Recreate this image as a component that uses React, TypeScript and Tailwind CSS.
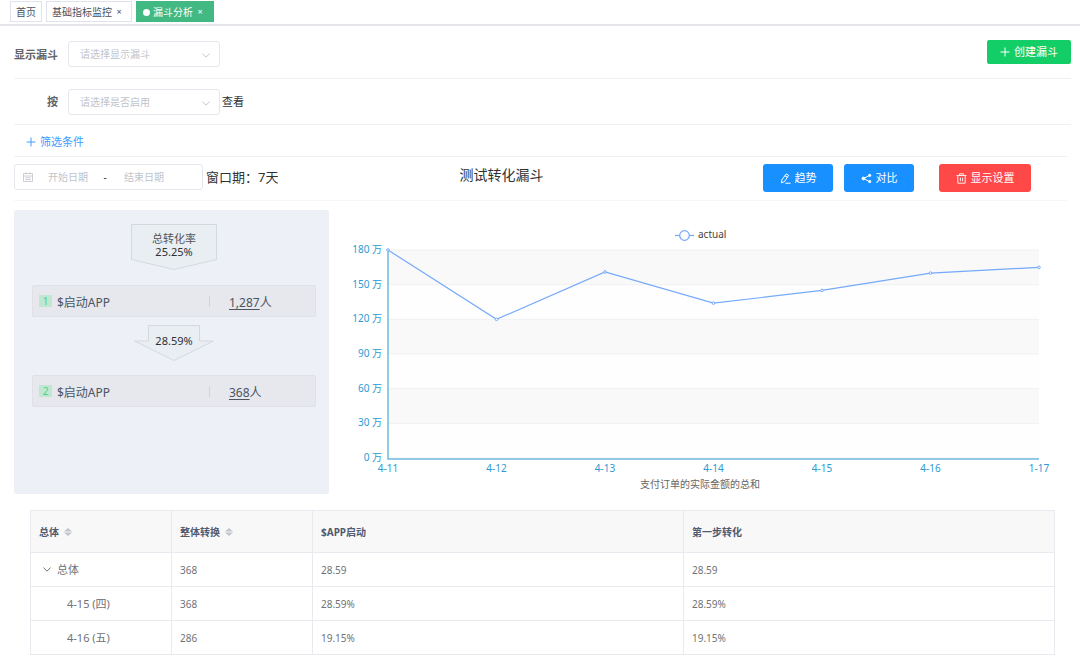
import React from "react";

type IconProps = { className?: string };

const PlusIcon = ({ className = "" }: IconProps) => (
  <svg viewBox="0 0 10 10" className={`h-[10px] w-[10px] shrink-0 ${className}`} fill="none" stroke="currentColor" aria-hidden="true">
    <path d="M5 .5v9M.5 5h9" />
  </svg>
);

const EditIcon = () => (
  <svg viewBox="0 0 11 11" className="h-[11px] w-[11px] shrink-0" fill="none" stroke="currentColor" aria-hidden="true">
    <path d="M6.200 .9 8.600 2.300 4.500 8.600 1.400 9.900 1.900 6.900ZM5 2.800 7.400 4.200M5.200 10.200H10.600" strokeLinejoin="round" />
  </svg>
);

const ShareIcon = () => (
  <svg viewBox="0 0 11 11" className="h-[11px] w-[11px] shrink-0" fill="currentColor" stroke="currentColor" aria-hidden="true">
    <path d="M2.4 5.5 8.6 2.4M2.4 5.5 8.6 8.6" fill="none" />
    <circle cx="2.4" cy="5.5" r="1.4" />
    <circle cx="8.7" cy="2.4" r="1.1" />
    <circle cx="8.7" cy="8.6" r="1.1" />
  </svg>
);

const TrashIcon = () => (
  <svg viewBox="0 0 11 11" className="h-[11px] w-[11px] shrink-0" fill="none" stroke="currentColor" strokeWidth=".9" aria-hidden="true">
    <path d="M.6 2.5h9.8M3.6 2.5V.8h3.8v1.7M1.8 2.5v7.7h7.4V2.5M4.4 4.6v3.6M6.6 4.6v3.6" />
  </svg>
);

const CalendarIcon = () => (
  <svg viewBox="0 0 10 10" className="h-[10px] w-[10px] shrink-0" fill="none" stroke="#c0c4cc" strokeWidth=".8" aria-hidden="true">
    <path d="M.5 1.5h9v8h-9zM.5 4h9M3 .3v2M7 .3v2M2.3 5.8h5.4M2.3 7.6h5.4" />
  </svg>
);

const ChevronIcon = ({ className = "" }: IconProps) => (
  <svg viewBox="0 0 8 5" className={`h-[5px] w-[8px] ${className}`} fill="none" stroke="currentColor" aria-hidden="true">
    <path d="M.4 .5 4 4.2 7.6 .5" />
  </svg>
);

const SortIcon = () => (
  <svg viewBox="0 0 8 8" className="h-2 w-2" fill="#c0c4cc" aria-hidden="true">
    <path d="M4 0 8 3.600H0ZM4 8 0 4.400H8Z" />
  </svg>
);

function Picker({ id, placeholder }: { id: string; placeholder: string }) {
  return (
    <div className="relative w-[152px]">
      <select
        id={id}
        defaultValue=""
        className="h-[26px] w-full appearance-none rounded-[3px] border border-[#e4e7ed] bg-white pl-[11px] pr-6 text-[10px] text-[#c0c4cc] outline-none"
      >
        <option value="">{placeholder}</option>
      </select>
      <ChevronIcon className="pointer-events-none absolute right-[10px] top-3 text-[#c0c4cc]" />
    </div>
  );
}

function Step({ index, count }: { index: number; count: string }) {
  return (
    <div className="flex h-8 w-full items-center rounded-[2px] border border-[#dfe1e6] bg-[#e6e8ed] pl-[6px] text-[12px] text-[#4b5563]">
      <span className="flex h-3 w-[13px] items-center justify-center bg-[#c0e8d0] text-[10px] leading-3 text-[#4fce8e]">{index}</span>
      <span className="ml-[5px] flex-1 pt-[3px]">$启动APP</span>
      <span className="h-[11px] w-px bg-[#d0d4da]" />
      <span className="w-[105px] pl-[19px] pt-[3px]">
        <a href="#users" className="underline underline-offset-2">{count}</a>人
      </span>
    </div>
  );
}

const points = [
  { label: "4-11", value: 180 },
  { label: "4-12", value: 120 },
  { label: "4-13", value: 161 },
  { label: "4-14", value: 134 },
  { label: "4-15", value: 145 },
  { label: "4-16", value: 160 },
  { label: "1-17", value: 165 },
];
const ticks = [0, 30, 60, 90, 120, 150, 180];
const left = 59;
const right = 710;
const bottom = 248;
const top = 40;
const xOf = (i: number) => left + (i * (right - left)) / (points.length - 1);
const yOf = (v: number) => bottom - (v * (bottom - top)) / 180;

function TrendChart() {
  return (
    <svg viewBox="0 0 751 284" className="min-w-0 flex-1 self-start text-[10px]" role="img" aria-label="actual">
      {ticks.slice(1).map((t) => (
        <rect key={t} x={left} y={yOf(t)} width={right - left} height={(bottom - top) / 6} fill={t % 60 === 0 ? "#f9f9f9" : "#fefefe"} />
      ))}
      {ticks.map((t) => (
        <g key={t}>
          <line x1={left} x2={right} y1={yOf(t)} y2={yOf(t)} stroke="#f0f0f0" />
          <text x={left - 6} y={yOf(t) + 3} textAnchor="end" fill="#2b9bd4">{t} 万</text>
        </g>
      ))}
      <path d={`M${left} ${top}V${bottom + 1}H${right}`} fill="none" stroke="#6dbbe0" strokeWidth="1.5" />
      <polyline points={points.map((p, i) => `${xOf(i)},${yOf(p.value)}`).join(" ")} fill="none" stroke="#75a9fb" strokeWidth="1.2" />
      {points.map((p, i) => (
        <g key={p.label}>
          <circle cx={xOf(i)} cy={yOf(p.value)} r="1.3" fill="#fff" stroke="#75a9fb" />
          <text x={xOf(i)} y="262" textAnchor="middle" fill="#2b9bd4">{p.label}</text>
        </g>
      ))}
      <path d="M346 25.500h19" stroke="#75a9fb" strokeWidth="1.2" />
      <circle cx="355.500" cy="25.500" r="4.800" fill="#fff" stroke="#75a9fb" strokeWidth="1.2" />
      <text x="369" y="28" fill="#444">actual</text>
      <text x="371" y="278" textAnchor="middle" fill="#666">支付订单的实际金额的总和</text>
    </svg>
  );
}

const rows = [
  ["总体", "368", "28.59", "28.59"],
  ["4-15 (四)", "368", "28.59%", "28.59%"],
  ["4-16 (五)", "286", "19.15%", "19.15%"],
];

export default function App() {
  return (
    <div className="min-h-screen bg-white font-['Noto_Sans','Noto_Sans_CJK_SC',sans-serif] text-[11px] leading-4 text-[#303133]">
      <nav className="flex h-[26px] items-start gap-1 border-b-2 border-[#e4e5e8] pl-[10px] pt-px text-[10px] text-[#495060]">
        <a href="#home" className="flex h-[21px] items-center border border-[#dfe3ec] px-[5px] pt-px">首页</a>
        <div className="flex h-[21px] items-center gap-[3px] border border-[#dfe3ec] pl-[5px] pr-2 pt-px">
          <a href="#metrics">基础指标监控</a>
          <button type="button" aria-label="关闭基础指标监控" className="w-2 text-center text-[9px]">×</button>
        </div>
        <div className="flex h-[21px] items-center gap-[3px] bg-[#42b983] pl-[7px] pr-[10px] pt-px text-white">
          <span className="h-[7px] w-[7px] rounded-full bg-white" />
          <a href="#funnel" aria-current="page">漏斗分析</a>
          <button type="button" aria-label="关闭漏斗分析" className="w-2 text-center text-[9px]">×</button>
        </div>
      </nav>

      <main className="pl-[14px] pr-[9px]">
        <div className="flex h-[53px] items-start border-b border-[#eef1f6] pt-[15px]">
          <label htmlFor="funnel" className="w-[54px] pt-[6px] font-bold text-[#606266]">显示漏斗</label>
          <Picker id="funnel" placeholder="请选择显示漏斗" />
          <button type="button" className="-mt-px ml-auto flex h-6 w-[84px] items-center justify-center gap-1 rounded-[2px] bg-[#13ce66] text-white">
            <PlusIcon />
            创建漏斗
          </button>
        </div>

        <div className="flex h-[46px] items-center border-b border-[#eef1f6]">
          <label htmlFor="enabled" className="w-[54px] pr-[10px] text-right font-bold text-[#606266]">按</label>
          <Picker id="enabled" placeholder="请选择是否启用" />
          <span className="ml-[2px]">查看</span>
        </div>

        <div className="mr-1 flex h-8 items-center border-b border-[#eef1f6] pl-3 pt-[3px]">
          <button type="button" className="flex items-center gap-1 text-[#409eff]">
            <PlusIcon />
            筛选条件
          </button>
        </div>

        <div className="mr-1 flex h-11 items-start border-b border-[#f6f7f9] pt-[7px]">
          <div className="flex h-[26px] w-[189px] items-center rounded-[3px] border border-[#e4e7ed] px-2 text-[10px]">
            <CalendarIcon />
            <input aria-label="开始日期" placeholder="开始日期" className="ml-[6px] w-[58px] text-center outline-none placeholder:text-[#c0c4cc]" />
            <span className="w-4 text-center">-</span>
            <input aria-label="结束日期" placeholder="结束日期" className="w-[62px] text-center outline-none placeholder:text-[#c0c4cc]" />
          </div>
          <span className="ml-[3px] pt-[5px] text-[13px]">窗口期：7天</span>
          <h1 className="flex-1 pl-[181px] pt-px text-[14px] leading-5">测试转化漏斗</h1>
          <div className="mr-9 flex">
            <button type="button" className="flex h-7 w-[70px] items-center justify-center gap-1 rounded-[3px] bg-[#1890ff] text-white">
              <EditIcon />
              趋势
            </button>
            <button type="button" className="ml-[11px] flex h-7 w-[70px] items-center justify-center gap-1 rounded-[3px] bg-[#1890ff] text-white">
              <ShareIcon />
              对比
            </button>
            <button type="button" className="ml-[25px] flex h-7 w-[92px] items-center justify-center gap-1 rounded-[3px] bg-[#ff4949] text-white">
              <TrashIcon />
              显示设置
            </button>
          </div>
        </div>

        <div className="-mr-[9px] mt-[9px] flex">
          <section className="flex h-[284px] w-[315px] shrink-0 flex-col items-center rounded-[2px] bg-[#edf0f6] pl-[18px] pr-[13px] pt-[14px]">
            <div className="relative h-[46px] w-[86px]">
              <svg viewBox="0 0 86 46" className="absolute inset-0" fill="#e8eef2" stroke="#d5d9de" aria-hidden="true">
                <path d="M.5 .5h85v35L43 45.500 .5 35.500Z" />
              </svg>
              <div className="relative pt-2 text-center leading-[13px]">
                <p className="text-[#555]">总转化率</p>
                <p>25.25%</p>
              </div>
            </div>
            <div className="mt-[15px] w-full">
              <Step index={1} count="1,287" />
            </div>
            <div className="relative my-2 flex h-[42px] w-20 justify-center">
              <svg viewBox="0 0 80 36" className="absolute inset-x-0 top-0 h-9" fill="#e8eef2" stroke="#d5d9de" aria-hidden="true">
                <path d="M14.500 .5h51v15.500H79.500L40 35.500 .5 16H14.500Z" />
              </svg>
              <span className="relative pt-2">28.59%</span>
            </div>
            <Step index={2} count="368" />
          </section>
          <TrendChart />
        </div>

        <div className="mx-4 mt-4">
          <table className="w-full table-fixed border-collapse text-left text-[10px] text-[#707276]">
            <colgroup>
              <col className="w-[141px]" />
              <col className="w-[141px]" />
              <col />
              <col />
            </colgroup>
            <thead className="bg-[#f8f8f9] text-[#515a6e]">
              <tr className="h-[42px]">
                {["总体", "整体转换", "$APP启动", "第一步转化"].map((title, i) => (
                  <th key={title} scope="col" className="border border-[#e8eaf0] px-2 font-bold">
                    <span className="flex items-center gap-[5px]">
                      {title}
                      {i < 2 && (
                        <button type="button" aria-label={`${title}排序`}>
                          <SortIcon />
                        </button>
                      )}
                    </span>
                  </th>
                ))}
              </tr>
            </thead>
            <tbody>
              {rows.map((row, r) => (
                <tr key={row[0]} className="h-[34px]">
                  {row.map((cell, c) => (
                    <td key={c} className="border border-[#e8eaf0] px-2">
                      {c > 0 ? (
                        cell
                      ) : r === 0 ? (
                        <button type="button" aria-expanded="true" className="flex items-center gap-[6px] pl-1 text-[11px]">
                          <ChevronIcon />
                          {cell}
                        </button>
                      ) : (
                        <span className="pl-7 text-[11px]">{cell}</span>
                      )}
                    </td>
                  ))}
                </tr>
              ))}
            </tbody>
          </table>
        </div>
      </main>
    </div>
  );
}
